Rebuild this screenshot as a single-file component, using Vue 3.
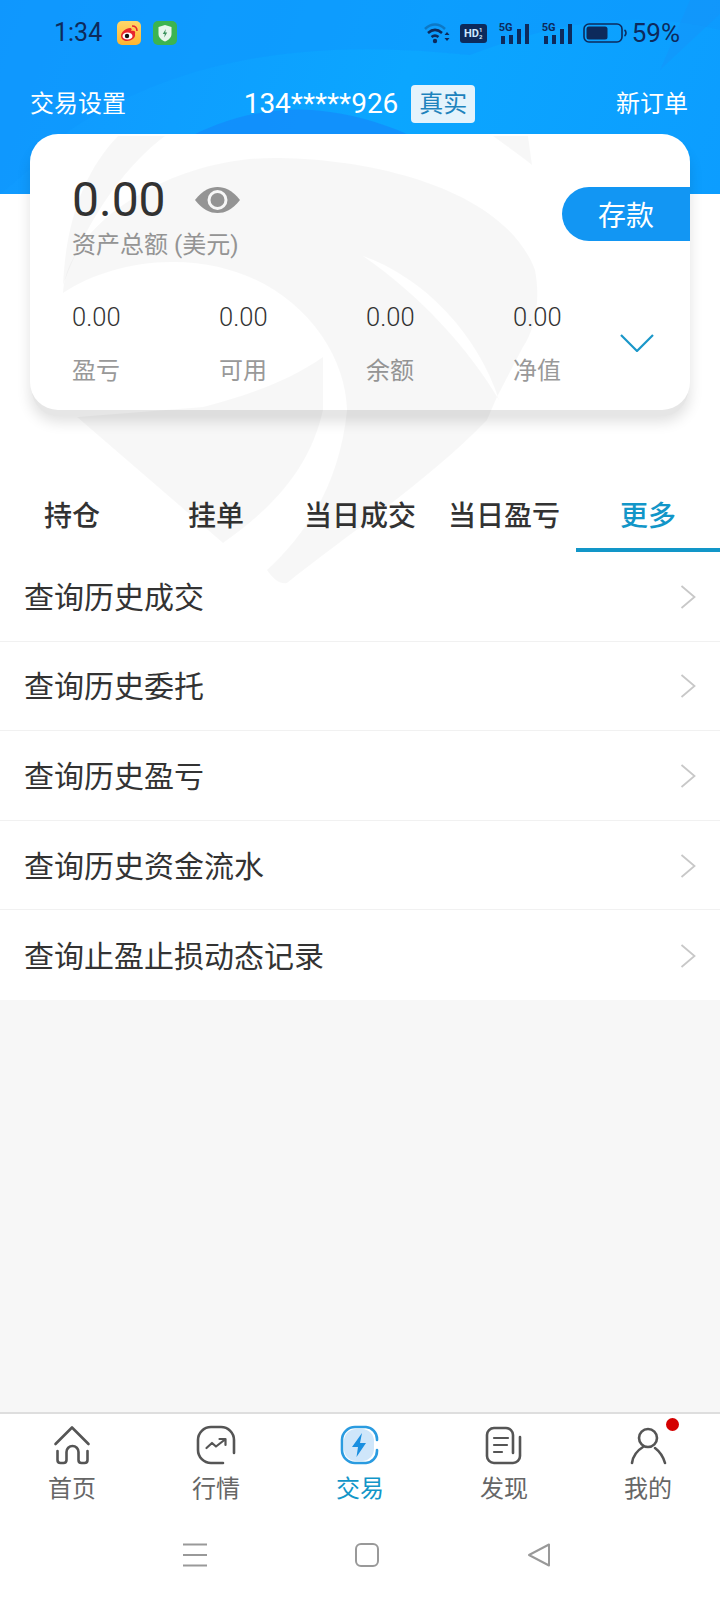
<template>
  <div class="page">
    <header class="top">
      <svg class="top-art" viewBox="0 0 720 194" width="720" height="194">
        <path d="M0 0H720V30C640 10 560 20 470 55C330 40 190 50 70 130C50 150 30 170 0 194Z" fill="#0f97fe" opacity="0.55" />
        <path d="M120 194C170 130 260 100 330 112C390 120 450 150 500 194Z" fill="#1489fb" opacity="0.7" />
        <path d="M660 70L720 14V0H690Z" fill="#1b8ef7" opacity="0.35" />
      </svg>

      <div class="status">
        <span class="time">1:34</span>
        <svg class="app-icon first" viewBox="0 0 24 24" width="24" height="24">
          <defs>
            <linearGradient id="wb" x1="0" y1="0" x2="0" y2="1">
              <stop offset="0" stop-color="#ffd76a" />
              <stop offset="1" stop-color="#ffb52e" />
            </linearGradient>
          </defs>
          <rect width="24" height="24" rx="5" fill="url(#wb)" />
          <path d="M4 15c0-4 5-8 9-8 2 0 2 2 1 3 3-1 5 0 4 3 1 4-4 7-8 7-3 0-6-2-6-5z" fill="#e8262d" />
          <ellipse cx="10.5" cy="15" rx="5" ry="3.6" fill="#fff" />
          <circle cx="10" cy="15" r="2.2" fill="#111" />
          <path d="M15 5c3 0 5 2 5 5" stroke="#e8262d" stroke-width="1.6" fill="none" />
        </svg>
        <svg class="app-icon" viewBox="0 0 24 24" width="24" height="24">
          <rect width="24" height="24" rx="5" fill="#3cb450" />
          <path d="M12 4l6.5 2v7c0 3.500-3 6-6.500 7.500C8.500 19 5.500 16.500 5.500 13V6z" fill="#e6f6ec" />
          <path d="M12.800 8l-3 5h2l-.6 3.500 3-5h-2z" fill="#3a8f5a" />
        </svg>

        <div class="status-right">
          <svg viewBox="0 0 26 22" width="26" height="22">
            <path d="M1 7C7 1 15 1 21 7" stroke="#0f5f9f" stroke-width="2.500" fill="none" opacity="0.6" />
            <path d="M4 11c4.500-4 9.500-4 14 0" stroke="#0d2a5c" stroke-width="2.500" fill="none" />
            <path d="M7.500 15c2.500-2 4.500-2 7 0" stroke="#0d2a5c" stroke-width="2.500" fill="none" />
            <circle cx="11" cy="19" r="2.200" fill="#0d2a5c" />
            <path d="M20.500 13l2.500-3 2.500 3zM20.500 16l2.500 3 2.500-3z" fill="#0d2a5c" />
          </svg>
          <span class="hd">HD<i>1<br />2</i></span>
          <span v-for="n in 2" :key="n" class="signal">
            <b>5G</b>
            <svg viewBox="0 0 31 21" width="31" height="21">
              <rect x="2" y="13" width="4" height="8" fill="#0d2a5c" />
              <rect x="10" y="12" width="4" height="9" fill="#0d2a5c" />
              <rect x="18" y="6" width="4" height="15" fill="#0d2a5c" />
              <rect x="26" y="1" width="4" height="20" fill="#0d2a5c" />
            </svg>
          </span>
          <svg class="battery" viewBox="0 0 44 20" width="44" height="20">
            <rect x="1" y="1" width="38" height="18" rx="5" fill="none" stroke="#0d2a5c" stroke-width="1.600" />
            <rect x="3.500" y="3.500" width="21" height="13" rx="2.500" fill="#0d2a5c" />
            <path d="M41.500 7c2 1.500 2 4.500 0 6" stroke="#0d2a5c" stroke-width="1.600" fill="none" />
          </svg>
          <span class="percent">59%</span>
        </div>
      </div>

      <div class="title-bar">
        <span>交易设置</span>
        <div class="account">
          <span class="phone">134*****926</span>
          <span class="real">真实</span>
        </div>
        <span>新订单</span>
      </div>
    </header>

    <section class="card">
      <div class="card-top">
        <div>
          <div class="total-line">
            <span class="total">0.00</span>
            <svg class="eye" viewBox="0 0 45 26" width="45" height="26">
              <path d="M0 13C8 3 15 0 22.500 0S37 3 45 13C37 23 30 26 22.500 26S8 23 0 13z" fill="#999" />
              <circle cx="22.500" cy="13" r="10" fill="#fff" />
              <circle cx="22.500" cy="13" r="7" fill="#999" />
            </svg>
          </div>
          <div class="total-label">资产总额 (美元)</div>
        </div>
        <button class="deposit" type="button">存款</button>
      </div>

      <div class="stats">
        <div v-for="item in stats" :key="item">
          <div class="stat-value">0.00</div>
          <div class="stat-label">{{ item }}</div>
        </div>
        <svg class="expand" viewBox="0 0 34 18" width="34" height="18">
          <path d="M1 1L17 17L33 1" fill="none" stroke="#1a97c9" stroke-width="2.200" />
        </svg>
      </div>
    </section>

    <nav class="tabs">
      <div v-for="(tab, i) in tabs" :key="tab" class="tab" :class="{ active: i === 4 }">{{ tab }}</div>
    </nav>

    <ul class="list">
      <li v-for="row in rows" :key="row" class="row">
        <span>{{ row }}</span>
        <svg class="row-arrow" viewBox="0 0 16 24" width="16" height="24">
          <path d="M1.500 1L14.500 12L1.500 23" fill="none" stroke="#c8c8c8" stroke-width="1.800" />
        </svg>
      </li>
    </ul>

    <div class="blank"></div>

    <footer class="bottom">
      <div class="tabbar">
        <div class="bar-item">
          <svg viewBox="0 0 40 40" width="40" height="40" class="bar-icon">
            <path d="M3.500 19L20 2.500L36.500 19M5.500 26V35q0 3 3 3h3q3 0 3-3V27a6 6 0 0 1 12 0V35q0 3 3 3h3q3 0 3-3V26" />
          </svg>
          <span>首页</span>
        </div>
        <div class="bar-item">
          <svg viewBox="0 0 40 40" width="40" height="40" class="bar-icon">
            <path d="M38 28V15a13 13 0 0 0-13-13H15A13 13 0 0 0 2 15V25a13 13 0 0 0 13 13H27" />
            <path d="M10.500 23L16 18L20 21.500L29 14.500M23.500 14H29.500V20" stroke-width="2.200" />
          </svg>
          <span>行情</span>
        </div>
        <div class="bar-item on">
          <svg viewBox="0 0 40 40" width="40" height="40" class="bar-icon">
            <rect x="4" y="4" width="30" height="32" rx="12" fill="#cfe6fa" stroke="none" />
            <path d="M37 15V14A12 12 0 0 0 26 2H15A13 13 0 0 0 2 15V25A13 13 0 0 0 15 38H26A12 12 0 0 0 37 26V25" stroke="#2a9be0" />
            <path d="M22 8L12 22H18L16.500 32L26 18H20z" fill="#1a8fe0" stroke="none" />
          </svg>
          <span>交易</span>
        </div>
        <div class="bar-item">
          <svg viewBox="0 0 40 40" width="40" height="40" class="bar-icon">
            <path d="M36 12V31a7 7 0 0 1-7 7H10a7 7 0 0 1-7-7V10a7 7 0 0 1 7-7H22a7 7 0 0 1 7 7V28" />
            <path d="M10 13H24M10 20H23M10 27H18" stroke-width="2.200" />
          </svg>
          <span>发现</span>
        </div>
        <div class="bar-item me">
          <svg viewBox="0 0 40 40" width="40" height="40" class="bar-icon">
            <circle cx="20" cy="13" r="9" />
            <path d="M4 38C5 31 10 25 15 22M27 23C31 26 35 31 37 38" />
          </svg>
          <span>我的</span>
          <i class="dot"></i>
        </div>
      </div>

      <div class="sys-nav">
        <svg viewBox="0 0 24 24" width="24" height="24">
          <path d="M0 1.500H24M0 12H24M0 22.500H24" stroke="#999" stroke-width="2" />
        </svg>
        <svg viewBox="0 0 24 24" width="24" height="24">
          <rect x="1" y="1" width="22" height="22" rx="5" fill="none" stroke="#999" stroke-width="2" />
        </svg>
        <svg viewBox="0 0 24 24" width="24" height="24">
          <path d="M22 1.500V22.500L2 12z" fill="none" stroke="#999" stroke-width="2" stroke-linejoin="round" />
        </svg>
      </div>
    </footer>

    <!-- watermark sits over the card and the tabs -->
    <svg class="watermark" viewBox="0 0 720 620" width="720" height="620">
      <path
        fill-rule="evenodd"
        d="M63 293C66 225 170 158 273 158C375 158 505 190 535 270C541 300 535 330 523 347L497 397L487 420C430 480 340 540 287 583C280 585 272 578 267 570C310 530 340 480 347 410C345 340 280 262 173 262C130 262 90 275 63 293ZM363 256C425 278 478 335 499 400C470 350 420 295 363 256Z"
      />
      <path d="M323 357C290 380 250 395 203 407L77 417L223 543C270 510 310 470 323 410Z" />
      <path d="M118 136C85 170 66 220 63 285C85 225 120 170 165 136Z" />
      <path d="M493 136H528L532 165C520 155 505 145 493 136Z" />
    </svg>
  </div>
</template>

<script setup>
const stats = ["盈亏", "可用", "余额", "净值"];
const tabs = ["持仓", "挂单", "当日成交", "当日盈亏", "更多"];
const rows = [
  "查询历史成交",
  "查询历史委托",
  "查询历史盈亏",
  "查询历史资金流水",
  "查询止盈止损动态记录",
];
</script>

<style scoped>
.page {
  position: relative;
  width: 720px;
  height: 1600px;
  display: flex;
  flex-direction: column;
  overflow: hidden;
  background: #fff;
  color: #333;
  font-family: Roboto, "Noto Sans CJK SC", sans-serif;
}

.top {
  position: relative;
  height: 194px;
  flex: none;
  background: linear-gradient(110deg, #1198ff 0%, #0ba6ff 55%, #0c9dff 100%);
  color: #fff;
}
.top-art {
  position: absolute;
  left: 0;
  top: 0;
}
.status {
  position: relative;
  display: flex;
  align-items: center;
  height: 24px;
  padding: 21px 40px 0 54px;
  color: #0d2a5c;
}
.time {
  font-size: 25px;
  line-height: 24px;
  width: 63px;
}
.app-icon {
  margin-right: 12px;
}
.status-right {
  margin-left: auto;
  display: flex;
  align-items: center;
  gap: 10px;
}
.hd {
  display: flex;
  align-items: center;
  justify-content: center;
  width: 27px;
  height: 19px;
  border-radius: 3px;
  background: #0d2a5c;
  color: #cfe8ff;
  font-size: 11px;
  font-weight: 700;
  line-height: 1;
}
.hd i {
  font-style: normal;
  font-size: 6px;
  line-height: 7px;
}
.signal {
  position: relative;
  display: flex;
  width: 31px;
  height: 21px;
  margin-left: 2px;
}
.signal b {
  position: absolute;
  left: 0;
  top: -1px;
  font-size: 11px;
  line-height: 12px;
  font-weight: 700;
}
.percent {
  font-size: 26px;
  line-height: 24px;
  margin-left: -5px;
}

.title-bar {
  position: relative;
  display: flex;
  align-items: center;
  justify-content: space-between;
  padding: 40px 32px 0 30px;
  font-size: 24px;
  line-height: 38px;
}
.account {
  display: flex;
  align-items: center;
  gap: 13px;
  margin-right: 23px;
}
.phone {
  font-size: 28px;
}
.real {
  width: 64px;
  height: 38px;
  border-radius: 4px;
  background: #e4f3fc;
  color: #1d83bd;
  text-align: center;
}

.card {
  position: relative;
  flex: none;
  height: 276px;
  box-sizing: border-box;
  margin: -60px 30px 72px;
  padding-top: 36px;
  border-radius: 28px;
  background: #fff;
  box-shadow: 0 8px 0 -2px #e6e6e6, 0 12px 14px rgba(0, 0, 0, 0.12);
}
.card-top {
  display: flex;
  justify-content: space-between;
  align-items: flex-start;
  padding-left: 42px;
}
.total-line {
  display: flex;
  align-items: center;
  height: 60px;
}
.total {
  font-size: 48px;
  line-height: 60px;
}
.eye {
  margin-left: 29px;
}
.total-label {
  font-size: 24px;
  line-height: 34px;
  margin-top: -2px;
  color: #999;
}
.deposit {
  width: 128px;
  height: 54px;
  margin-top: 17px;
  padding: 0;
  border: none;
  border-radius: 27px 0 0 27px;
  background: #1296f3;
  color: #fff;
  font-family: inherit;
  font-size: 28px;
}
.stats {
  display: grid;
  grid-template-columns: 147px 147px 147px 107px 34px;
  padding: 38px 0 0 42px;
}
.stat-value {
  font-size: 25.500px;
  line-height: 34px;
  font-weight: 300;
}
.stat-label {
  margin-top: 20px;
  font-size: 24px;
  line-height: 34px;
  color: #999;
}
.expand {
  margin-top: 34px;
}

.tabs {
  display: flex;
  flex: none;
  height: 70px;
}
.tab {
  flex: 1;
  box-sizing: border-box;
  padding-top: 4px;
  border-bottom: 4px solid transparent;
  text-align: center;
  font-size: 28px;
  line-height: 62px;
  font-weight: 500;
}
.tab.active {
  border-bottom-color: #1296c8;
  color: #1296c8;
}

.list {
  flex: none;
  margin: 0;
  padding: 0;
  list-style: none;
}
.row {
  display: flex;
  align-items: center;
  justify-content: space-between;
  box-sizing: border-box;
  height: 89.600px;
  padding: 0 24px 3px;
  border-bottom: 1px solid #f1f1f1;
  font-size: 30px;
}
.row:last-child {
  border-bottom: none;
}
.row-arrow {
  margin-top: 4px;
}

.blank {
  flex: 1;
  background: #f7f7f7;
}

.bottom {
  flex: none;
  height: 188px;
  box-sizing: border-box;
  border-top: 2px solid #dedede;
  background: #fff;
}
.tabbar {
  display: flex;
  padding-top: 11px;
}
.bar-item {
  position: relative;
  flex: 1;
  display: flex;
  flex-direction: column;
  align-items: center;
  color: #666;
  font-size: 24px;
  line-height: 34px;
}
.bar-item span {
  margin-top: 7px;
}
.bar-icon {
  fill: none;
  stroke: #555;
  stroke-width: 2.600;
  stroke-linecap: round;
  stroke-linejoin: round;
}
.bar-item.on {
  color: #1296c8;
}
.dot {
  position: absolute;
  left: 90px;
  top: -7px;
  width: 13px;
  height: 13px;
  border-radius: 50%;
  background: #d40000;
}
.sys-nav {
  display: flex;
  justify-content: center;
  gap: 148px;
  padding: 37px 0 0 14px;
}

.watermark {
  position: absolute;
  left: 0;
  top: 0;
  pointer-events: none;
  fill: rgba(0, 0, 0, 0.03);
}
</style>
